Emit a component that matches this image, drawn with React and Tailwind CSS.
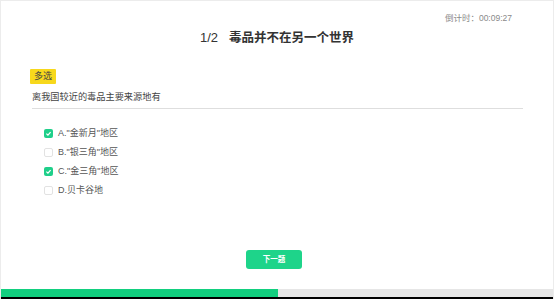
import React from 'react';

const options = [
    { label: 'A."金新月"地区', checked: true },
    { label: 'B."银三角"地区', checked: false },
    { label: 'C."金三角"地区', checked: true },
    { label: 'D.贝卡谷地', checked: false },
];

const Check = ({ checked }) =>
    checked ? (
        <span className="w-[9px] h-[9px] rounded-[2px] bg-[#1fcf8a] flex items-center justify-center">
            <svg width="7" height="7" viewBox="0 0 10 10">
                <path d="M2 5.2 L4.2 7.3 L8 3" fill="none" stroke="#fff" strokeWidth="1.8" />
            </svg>
        </span>
    ) : (
        <span className="w-[9px] h-[9px] rounded-[2px] border border-[#e2e2e2] bg-white"></span>
    );

const App = () => {
    return (
        <div
            className="w-[554px] h-[299px] flex flex-col bg-white border-l border-r border-t border-[#ececec] overflow-hidden leading-none"
            style={{ fontFamily: '"Liberation Sans", "Noto Sans CJK SC", sans-serif' }}
        >
            {/* Timer */}
            <div className="pt-[11px] pr-[41px] text-right text-[8.5px] leading-[12px] text-[#8a8a8a]">
                倒计时：00:09:27
            </div>

            {/* Title */}
            <div className="mt-[5px] flex justify-center items-center text-[12.5px] leading-[18px] font-bold text-[#333]">
                <span className="font-medium text-[13px]">1/2</span>
                <span className="ml-[11px]">毒品并不在另一个世界</span>
            </div>

            {/* Question */}
            <div className="mt-[22px] px-[29px] flex flex-col">
                <div className="w-fit bg-[#f7d81c] text-[#444] text-[9px] leading-[15px] px-[4px] rounded-[1px]">
                    多选
                </div>
                <div className="mt-[7px] ml-[2px] mr-[1px] pb-[4px] border-b border-[#dedede] text-[9.2px] leading-[13px] text-[#444]">
                    离我国较近的毒品主要来源地有
                </div>
            </div>

            {/* Options */}
            <div className="mt-[15px] pl-[43px] flex flex-col">
                {options.map((o, i) => (
                    <div key={i} className="h-[19px] flex items-center gap-[5px] text-[9px] text-[#555]">
                        <Check checked={o.checked} />
                        <span>{o.label}</span>
                    </div>
                ))}
            </div>

            <div className="flex-1"></div>

            {/* Next button */}
            <div className="pl-[245px] mb-[20px]">
                <button className="w-[56px] h-[19px] rounded-[3px] bg-[#1ed48a] text-white text-[7.5px] font-bold">
                    下一题
                </button>
            </div>

            {/* Progress */}
            <div className="h-[8px] flex bg-[#e6e6e6]">
                <div className="w-[277px] h-full bg-[#12cf7f]"></div>
            </div>
            <div className="h-[2px] bg-black"></div>
        </div>
    );
};

export default App;
